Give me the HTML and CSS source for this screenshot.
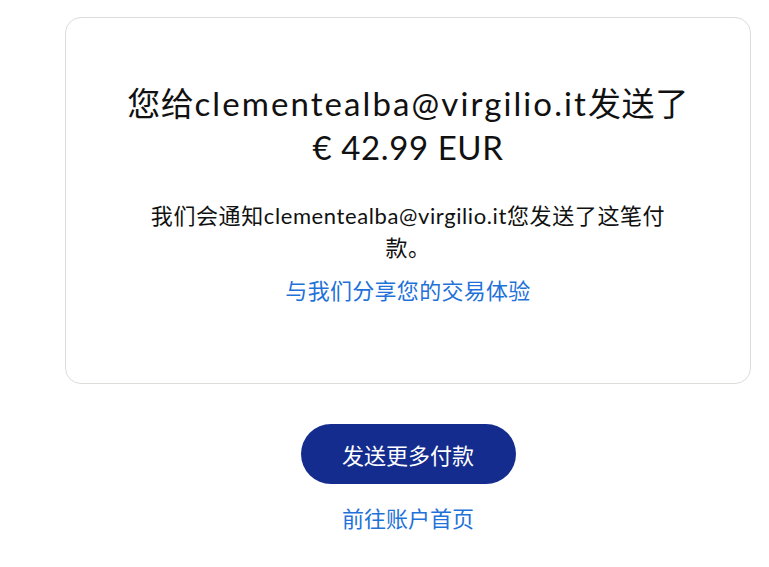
FILE: index.html
```html
<!DOCTYPE html>
<html lang="zh-CN">
<head>
<meta charset="utf-8">
<title>付款已发送</title>
<link rel="stylesheet" href="styles.css">
</head>
<body>
<main class="page">
  <section class="card">
    <h1 class="title">您给<span class="email">clementealba@virgilio.it</span>发送了<br>€ 42.99 EUR</h1>
    <p class="note">我们会通知clementealba@virgilio.it您发送了这笔付款。</p>
    <a class="feedback" href="#">与我们分享您的交易体验</a>
  </section>
  <div class="actions">
    <a class="primary-btn" href="#">发送更多付款</a>
    <a class="home-link" href="#">前往账户首页</a>
  </div>
</main>
</body>
</html>
```
FILE: styles.css
```css
html, body {
  margin: 0;
  padding: 0;
  background: #ffffff;
}

body {
  font-family: Lato, "Noto Sans CJK SC", sans-serif;
  color: #111111;
}

.page {
  padding: 17px 18px 0 65px;
}

.card {
  border: 1px solid #dcdcd8;
  border-radius: 16px;
  padding: 63px 20px 0;
  display: flex;
  flex-direction: column;
  align-items: center;
  text-align: center;
  height: 367px;
  box-sizing: border-box;
}

.title {
  margin: 0;
  font-size: 33px;
  font-weight: 400;
  line-height: 44px;
  letter-spacing: 0.6px;
  color: #111111;
}

.email {
  letter-spacing: 2.1px;
}

.note {
  margin: 31px 0 0;
  max-width: 530px;
  font-size: 22px;
  line-height: 32px;
  letter-spacing: 0.6px;
  color: #111111;
}

.feedback {
  margin-top: 11px;
  font-size: 22px;
  line-height: 32px;
  letter-spacing: 0.3px;
  color: #1f72d8;
  text-decoration: none;
}

.actions {
  display: flex;
  flex-direction: column;
  align-items: center;
  padding-top: 40px;
}

.primary-btn {
  display: flex;
  align-items: center;
  justify-content: center;
  width: 215px;
  height: 60px;
  box-sizing: border-box;
  border-radius: 30px;
  background: #142c8e;
  color: #ffffff;
  font-size: 22px;
  text-decoration: none;
}

.home-link {
  margin-top: 18px;
  font-size: 22px;
  line-height: 33px;
  color: #1f72d8;
  text-decoration: none;
}
```
